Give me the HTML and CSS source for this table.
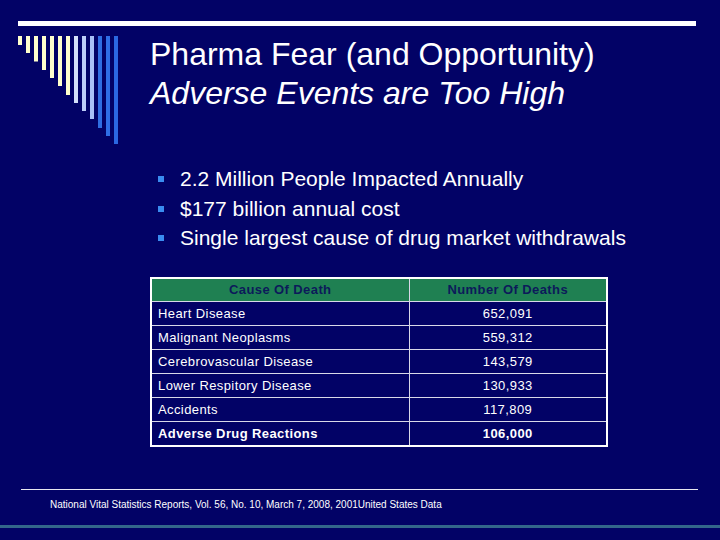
FILE: index.html
```html
<!DOCTYPE html>
<html>
<head>
<meta charset="utf-8">
<title>Pharma Fear</title>
<link rel="stylesheet" href="styles.css">
</head>
<body>
<div class="slide">
  <div class="rule-top"></div>
  <svg class="bars" width="104" height="110" viewBox="0 0 104 110" aria-hidden="true">
    <rect x="0" y="0" width="4" height="9" fill="#ffffcc"/>
    <rect x="8" y="0" width="4" height="17" fill="#ffffcc"/>
    <rect x="16" y="0" width="4" height="25.5" fill="#ffffcc"/>
    <rect x="24" y="0" width="4" height="34" fill="#ffffcc"/>
    <rect x="32" y="0" width="4" height="42" fill="#ffffcc"/>
    <rect x="40" y="0" width="4" height="50" fill="#ffffcc"/>
    <rect x="48" y="0" width="4" height="59" fill="#ffffcc"/>
    <rect x="56" y="0" width="4" height="67" fill="#d4e0fa"/>
    <rect x="64" y="0" width="4" height="75" fill="#bccdf8"/>
    <rect x="72" y="0" width="4" height="83" fill="#a9c0f6"/>
    <rect x="80" y="0" width="4" height="92" fill="#2f6ee2"/>
    <rect x="88" y="0" width="4" height="100" fill="#2f6ee6"/>
    <rect x="96" y="0" width="4" height="108" fill="#2b68e2"/>
  </svg>

  <h1 class="title">
    <span class="title-main">Pharma Fear (and Opportunity)</span>
    <em class="title-sub">Adverse Events are Too High</em>
  </h1>

  <ul class="bullets">
    <li><span class="dot"></span>2.2 Million People Impacted Annually</li>
    <li><span class="dot"></span>$177 billion annual cost</li>
    <li><span class="dot"></span>Single largest cause of drug market withdrawals</li>
  </ul>

  <table class="deaths">
    <colgroup>
      <col class="col-cause">
      <col class="col-num">
    </colgroup>
    <thead>
      <tr><th>Cause Of Death</th><th>Number Of Deaths</th></tr>
    </thead>
    <tbody>
      <tr><td>Heart Disease</td><td class="num">652,091</td></tr>
      <tr><td>Malignant Neoplasms</td><td class="num">559,312</td></tr>
      <tr><td>Cerebrovascular Disease</td><td class="num">143,579</td></tr>
      <tr><td>Lower Respitory Disease</td><td class="num">130,933</td></tr>
      <tr><td>Accidents</td><td class="num">117,809</td></tr>
      <tr class="strong"><td>Adverse Drug Reactions</td><td class="num">106,000</td></tr>
    </tbody>
  </table>

  <div class="rule-foot"></div>
  <p class="source">National Vital Statistics Reports, Vol. 56, No. 10, March 7, 2008, 2001United States Data</p>
  <div class="rule-bottom"></div>
</div>
</body>
</html>
```
FILE: styles.css
```css
html, body {
  margin: 0;
  padding: 0;
  background: #020266;
}

.slide {
  position: relative;
  width: 720px;
  height: 540px;
  overflow: hidden;
  background: #020266;
  color: #ffffff;
  font-family: "Liberation Sans", Arial, sans-serif;
  display: flex;
  flex-direction: column;
}

.rule-top {
  margin: 21px 0 0 18px;
  width: 678px;
  height: 5px;
  background: #ffffff;
}

.bars {
  position: absolute;
  left: 18px;
  top: 36px;
}

.title {
  margin: 9px 0 0 150px;
  font-size: 32px;
  line-height: 39px;
  font-weight: normal;
  display: flex;
  flex-direction: column;
}

.title-sub {
  font-style: italic;
}

.bullets {
  list-style: none;
  margin: 51px 0 0 158px;
  padding: 0;
  font-size: 21px;
  line-height: 29.5px;
}

.bullets li {
  display: flex;
  align-items: center;
  gap: 16px;
}

.dot {
  width: 6px;
  height: 6px;
  background: #3a8cf0;
  flex: none;
  margin-top: 1px;
}

.deaths {
  margin: 24px 0 0 150px;
  width: 456px;
  border-collapse: collapse;
  border: 2px solid #ffffff;
  font-size: 13px;
  letter-spacing: 0.4px;
  table-layout: fixed;
}

.col-cause {
  width: 258px;
}

.col-num {
  width: 198px;
}

.deaths th,
.deaths td {
  border: 1px solid #d8d8e8;
  padding: 0 6px;
}

.deaths th {
  height: 22px;
  background: #1f8052;
  color: #0c1a5a;
  font-weight: bold;
  text-align: center;
}

.deaths td {
  height: 23px;
  color: #ffffff;
  text-align: left;
}

.deaths td.num {
  text-align: center;
}

.deaths tr.strong td {
  font-weight: bold;
}

.rule-foot {
  margin: 42px 0 0 21px;
  width: 677px;
  height: 1px;
  background: #e8e8f0;
}

.source {
  margin: 9px 0 0 50px;
  font-size: 10px;
  line-height: 12px;
}

.rule-bottom {
  margin-top: 14px;
  width: 720px;
  height: 3px;
  background: #33668a;
}
```
